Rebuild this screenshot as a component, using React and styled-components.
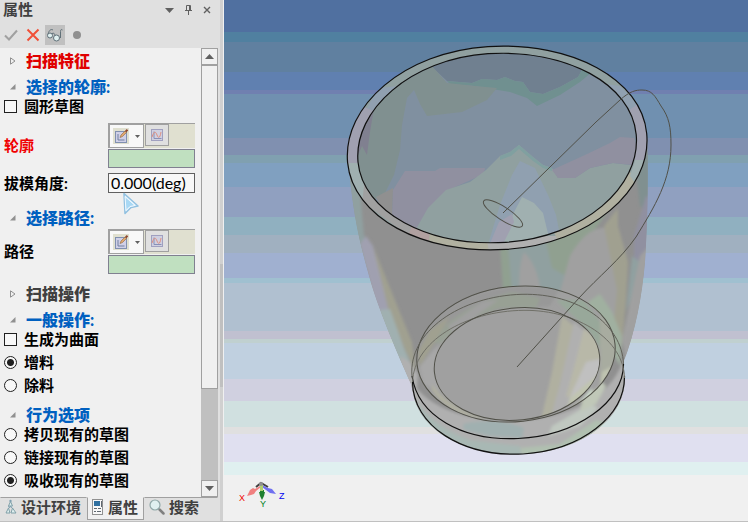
import { useRef, useState } from 'react';
import styled, { createGlobalStyle, css } from 'styled-components';

const colors = {
    panel: '#f0f0f0',
    header: '#e0e0e0',
    line: '#a0a0a0',
    track: '#c0c0c0',
    text: '#404040',
    accent: '#0060c0',
    required: '#f00000',
    title: '#e00000',
};

// [height, colour] from top to bottom
const skyBands = [
    [32, '#5070a0'], [10, '#5080a0'], [30, '#6080a0'], [18, '#6080b0'], [4, '#7080b0'],
    [44, '#7090b0'], [17, '#8090b0'], [8, '#80a0b0'], [24, '#80a0c0'], [30, '#90a0c0'],
    [18, '#90b0c0'], [18, '#a0b0c0'], [25, '#a0b0d0'], [5, '#a0c0d0'], [48, '#b0c0d0'],
    [8, '#c0c0d0'], [4, '#c0d0d0'], [36, '#c0d0e0'], [22, '#d0d0e0'], [26, '#d0e0e0'],
    [7, '#e0e0e0'], [28, '#e0e0f0'], [13, '#e0f0f0'], [46, '#f0f0f0'],
];

const skyGradient = () => {
    const total = skyBands.reduce((sum, [h]) => sum + h, 0);
    let y = 0;
    const stops = skyBands.map(([h, color]) => {
        const from = (y / total) * 100;
        y += h;
        return `${color} ${from}% ${(y / total) * 100}%`;
    });
    return `linear-gradient(${stops.join(', ')})`;
};

const tabs = [
    { id: 'env', title: '设计环境' },
    { id: 'props', title: '属性' },
    { id: 'search', title: '搜索' },
];

const SketchIcon = () => (
    <svg width="16" height="16" viewBox="0 0 16 16" aria-hidden="true">
        <rect width="16" height="16" fill="#e0e0d0" />
        <rect x="2.500" y="3.500" width="11" height="11" fill="#d0d0e8" stroke="#8090b0" />
        <path d="M5 6v6h6.500" fill="none" stroke="#7080a0" />
        <path d="M7 9.500l1-2.500 4-4 1.500 1.500-4 4z" fill="#e0a870" stroke="#906840" strokeWidth=".6" />
        <path d="M12 2.800L13.800 1l1.400 1.400-1.800 1.800z" fill="#904830" />
    </svg>
);

const CurveIcon = () => (
    <svg width="14" height="14" viewBox="0 0 14 14" aria-hidden="true">
        <rect x="1.500" y="1.500" width="11" height="11" fill="#d0d0e0" stroke="#a0a0c0" />
        <path d="M4 3.500v7h7.500" fill="none" stroke="#8890b8" />
        <path d="M2 9c2-6 3.500-6 5-2s3 3 4-3" fill="none" stroke="#e09080" />
    </svg>
);

const TabIcon = ({ id }) => {
    if (id === 'env') {
        return (
            <svg width="12" height="16" viewBox="0 0 12 16" aria-hidden="true">
                <g fill="#e0f0f0" stroke="#80a0a8" strokeWidth="1">
                    <path d="M5.500 2.500L3.500 7h4z" />
                    <path d="M3.500 9l-2.500 5h4zM7.500 9L6 14h5z" />
                </g>
                <circle cx="5.500" cy="2" r="1.200" fill="#80a0b0" />
                <path d="M3.500 7l1 2 1-2 1.500 2" fill="none" stroke="#80a0b0" />
            </svg>
        );
    }
    if (id === 'props') {
        return (
            <svg width="12" height="16" viewBox="0 0 12 16" aria-hidden="true">
                <rect x=".5" y=".5" width="10" height="15" fill="#f8f8f8" stroke="#909090" />
                <rect x="2" y="2" width="6" height="5" fill="#3070a0" />
                <path d="M9.500 2v6M2 9.500h3M6 9.500h3M2 12.500h2M5 12.500h4" stroke="#606870" />
            </svg>
        );
    }
    return (
        <svg width="16" height="16" viewBox="0 0 16 16" aria-hidden="true">
            <path d="M10.500 10.500l4 4" stroke="#808080" strokeWidth="2.500" strokeLinecap="round" />
            <circle cx="6" cy="6" r="5" fill="#e0f0f0" stroke="#90a8a8" strokeWidth="1.200" />
        </svg>
    );
};

const Cursor = () => (
    <CursorSvg width="18" height="24" viewBox="0 0 18 24" aria-hidden="true">
        <path d="M2 1.500L16 14l-7 1.500-6 6z" fill="#e8f4fc" stroke="#90c0e0" strokeWidth="1.500" strokeLinejoin="round" />
        <path d="M3 4.500l10 9-5 1-4 4z" fill="#a8d8f4" stroke="#f0f8ff" strokeWidth="1" />
    </CursorSvg>
);

const Section = ({ title, tone = 'accent', open = true, after = 'none', children }) => {
    const [isOpened, setIsOpened] = useState(open);

    return (
        <SectionBox $after={after}>
            <SectionTitle type="button" $tone={tone} aria-expanded={isOpened} onClick={() => setIsOpened(v => !v)}>
                <svg width="6" height="8" viewBox="0 0 6 8" aria-hidden="true">
                    {isOpened
                        ? <path d="M5.500 1v5.500H0z" fill="#909090" />
                        : <path d="M.5 .8v6.400L5 4z" fill="none" stroke="#909090" />}
                </svg>
                {title}
            </SectionTitle>
            {isOpened && children}
        </SectionBox>
    );
};

const Picker = ({ label, id, required }) => (
    <Field>
        <FieldLabel htmlFor={id} $required={required}>{label}</FieldLabel>
        <PickerBox>
            <PickerTools>
                <ToolButton type="button" $wide aria-label="Sketch">
                    <SketchIcon />
                    <svg width="5" height="3" viewBox="0 0 5 3" aria-hidden="true">
                        <path d="M0 0h5L2.500 3z" fill="#606060" />
                    </svg>
                </ToolButton>
                <ToolButton type="button" aria-label="Curve">
                    <CurveIcon />
                </ToolButton>
            </PickerTools>
            <PickerInput id={id} readOnly />
        </PickerBox>
    </Field>
);

const Option = ({ type = 'radio', children, ...rest }) => (
    <OptionLabel>
        {type === 'radio' ? <Radio type="radio" {...rest} /> : <Checkbox type="checkbox" {...rest} />}
        {children}
    </OptionLabel>
);

const OUTER = 'M347.600 162.600C342.500 106 404 52 488 46.600C572 41.500 641.500 79 646.700 133.500C652 190 590 244 506 249.400C422 254.600 352.800 217 347.600 162.600Z';
const INNER = 'M358 162C353.500 110 410.500 59 488 53.700C566.500 49 631.500 84 636.200 134.500C641 187 583.500 237 506 242.300C427.500 247 362.800 212 358 162Z';
const BODY = 'M349 168C353 215 360 245 371 283C380 313 398 355 411 384L414 398C424 434 468 456 523 454C580 452 624 420 625 380L623 364C636 330 642 296 645 262C648 215 648 180 647.500 138C640 230 360 260 349 168Z';

const Mug = () => (
    <g>
        <defs>
            <filter id="soft"><feGaussianBlur stdDeviation="1.500" /></filter>
            <clipPath id="rim"><path d={`${OUTER}${INNER}`} clipRule="evenodd" /></clipPath>
            <clipPath id="inside"><path d={INNER} /></clipPath>
            <clipPath id="wall"><path d={BODY} /></clipPath>
            <clipPath id="ring"><ellipse cx="516" cy="354" rx="99" ry="67" transform="rotate(-6 516 354)" /></clipPath>
            <clipPath id="floor"><ellipse cx="517" cy="364" rx="83" ry="56" transform="rotate(-6 517 364)" /></clipPath>
        </defs>

        <g clipPath="url(#wall)">
            <path d={BODY} fill="#909090" />
            <g filter="url(#soft)">
                {/* left side reflections */}
                <path d="M340 165L360 190L364 236L372 262L366 270L340 200Z" fill="#90a0a0" />
                <path d="M360 244L366 236L373 246L389 309L378 316Z" fill="#a0a0b0" />
                <path d="M373 246L390 288L412 342L416 372L405 350L388 308Z" fill="#a0a090" />
                <path d="M378 310L390 309L404 348L412 366L404 384L386 345Z" fill="#a0b0b0" />
                <path d="M400 356L410 362L418 374L416 400L404 388Z" fill="#b0b0b0" />
                {/* right side reflections */}
                <path d="M500 246L512 244L513 290L503 290Z" fill="#90a090" />
                <path d="M508 246L556 232L552 262L562 272L580 282L586 300L540 294L512 290Z" fill="#90a0a0" />
                <path d="M524 252C534 262 538 274 541 292L519 290C519 274 520 262 524 252Z" fill="#a0a0a0" />
                <path d="M546 242L610 208L592 234L574 252L566 276L552 268Z" fill="#90a090" />
                <path d="M570 256C580 238 594 226 606 228L620 250L620 340L594 312L560 292Z" fill="#a0a0a0" />
                <path d="M604 226L618 208L618 226L628 262L626 300L622 346L614 322L617 290Z" fill="#a0a090" />
                <path d="M636 170L654 140V220L640 206Z" fill="#809090" />
                <path d="M634 236L646 196L654 200V246L640 264L634 262Z" fill="#9090a0" />
                <path d="M632 256L640 262L636 286L626 312Z" fill="#90a0a0" />
                <path d="M640 256L654 240L650 300L626 360L622 340Z" fill="#a0a0a0" />
                <path d="M588 302L600 294L612 312L622 336L620 366L600 330Z" fill="#a0b0a0" />
                {/* base */}
                <path d="M406 366C420 440 600 440 623 360L634 394C626 446 580 464 520 464C462 464 406 434 406 380Z" fill="#b0b0b0" />
                <path d="M463 424C490 418 510 422 524 428L522 438L490 436L464 430Z" fill="#a0b0b0" />
                <path d="M414 396C424 416 444 430 470 440L520 446L522 458L470 453L426 432Z" fill="#a8b8b4" />
                <path d="M520 448L560 444L596 420L608 424L570 448L524 458Z" fill="#b0c0b0" />
                <path d="M552 426L590 404L598 408L580 426L548 436Z" fill="#c0c8c0" />
                <path d="M582 400L600 380L606 386L596 404L580 412Z" fill="#c0c8b8" />
            </g>
        </g>

        <g clipPath="url(#ring)">
            <path d="M410 280h210v150h-210z" fill="#a0a0a0" />
            <g filter="url(#soft)">
                <path d="M416 344C424 316 462 290 520 286L560 288L550 306L500 310L460 322L432 350L418 370Z" fill="#989898" />
                <path d="M430 342C450 316 480 300 512 292L540 298L536 308L500 308L466 320L440 344Z" fill="#98a094" />
                <path d="M448 326L482 302L498 300L476 316L454 334Z" fill="#a0a0a0" />
                <path d="M418 352L430 330L450 316L436 340L420 366Z" fill="#a0a090" />
                <path d="M420 366L438 346L434 372L440 392L424 384Z" fill="#a8a8a8" />
                <path d="M432 384C444 402 466 414 492 422L478 420C454 414 440 402 432 390Z" fill="#b0b0a0" />
                <path d="M556 300L584 300L600 322L600 348L588 330Z" fill="#98a89a" />
                <path d="M600 314L616 330L617 358L606 382L600 380Z" fill="#a8aca0" />
                <path d="M546 420L566 412L600 386L602 372L612 366L600 394L570 416Z" fill="#c0c4b0" />
                <path d="M574 412L582 400L592 388L592 402L582 412Z" fill="#d0e0d0" />
            </g>
        </g>

        <g clipPath="url(#floor)">
            <path d="M430 300h180v130h-180z" fill="#a0a0a0" />
            <g filter="url(#soft)">
                <path d="M562 316L574 326L560 384L550 424L540 424L552 372Z" fill="#b0b0a0" />
                <path d="M574 322L592 338L572 394L556 424L550 420L560 384Z" fill="#b0b0b0" />
                <path d="M584 328L606 346L604 368L574 400L566 396L576 360Z" fill="#b8b8a8" />
                <path d="M586 362L604 358L604 376L580 400L566 408L572 392Z" fill="#c0c0c0" />
                <path d="M586 384L602 372L592 394L566 410L570 398Z" fill="#c0c4b0" />
            </g>
        </g>

        <g clipPath="url(#inside)">
            <path d={INNER} fill="#8090a0" />
            <path d="M432 60L432 67L447 81L472 83L482 79L497 80L505 77L515 81L523 82L530 92L543 94L560 87L578 77L588 60L520 40Z" fill="#708090" />
            <path d="M447 81L472 83L482 79L497 80L505 77L515 81L523 82L530 92L543 94L560 87L578 77L584 66L592 72L580 82L560 95L537 106L527 98L510 92L492 89L475 86L450 84Z" fill="#709090" />
            <path d="M432 66L447 83L475 86L497 88L487 100L462 112L427 116L420 104L414 90L407 98L402 125L400 150L394 175L385 193L374 200L350 160L370 100Z" fill="#809090" />
            <path d="M356 160L358 128L374 108L370 132L367 155L362 146Z" fill="#808090" />
            <path d="M405 171L435 171L440 168L485 168L484 174L446 191L429 208L414 232L392 216L393 190Z" fill="#9090a0" />
            <path d="M376 197L393 188L392 216L382 210Z" fill="#909090" />
            <path d="M412 236L428 208L446 190L470 182L486 170L500 156L510 152L519 145L533 157L543 165L552 168L558 178L575 178L590 168L613 163L640 166L620 210L560 244L480 250Z" fill="#90a0a0" />
            <path d="M500 156L510 152L519 145L533 157L543 165L552 168L552 171L543 168L533 161L519 149L511 156L500 160Z" fill="#80a0a0" />
            <path d="M552 170L585 155L610 143L620 137L634 138L640 155L633 165L613 163L590 168L575 178L558 178Z" fill="#9090a0" />
            <path d="M520 161L535 168L548 195L556 215L562 246L487 248L500 205L512 175Z" fill="#90a0b0" />
            <path d="M522 197L534 203L543 213L551 246L500 248L510 220Z" fill="#a0b0b0" />
            <path d="M489 246L499 222L512 214L514 222L502 246Z" fill="#a0a0b0" />
        </g>

        <g clipPath="url(#rim)">
            <path d={OUTER} fill="#90a0a0" />
            <path d="M366 110L378 88L400 86L374 114Z" fill="#90a0b0" />
            <path d="M340 163V120L362 106L376 112L360 163Z" fill="#a0a0b0" />
            <path d="M360 182L374 190L424 228L414 240L360 200Z" fill="#a0a0a0" />
            <path d="M345 163H360L364 186L362 204Z" fill="#a0b0b0" />
            <path d="M408 236L412 226L430 234L428 246Z" fill="#b0a0a0" />
            <path d="M428 250L430 230L486 238L496 252Z" fill="#b0b0a0" />
            <path d="M486 236H556L564 250L490 256Z" fill="#b0b0b0" />
            <path d="M554 232L630 172L642 186L562 252Z" fill="#b0b0a0" />
            <path d="M630 176L636 158L650 160L640 190Z" fill="#a0b0b0" />
            <path d="M606 84L620 86L640 106L626 112L610 94Z" fill="#90a0b0" />
            <path d="M626 112L638 104L652 130L650 160L634 160Z" fill="#a0a0b0" />
        </g>

        <g fill="none" stroke="#101010" strokeWidth="1.200">
            <path d={OUTER} />
            <path d={INNER} />
            <path d="M412 376C418 416 462 441 518 438.500C576 436 624 402 623.500 364" />
            <path d="M412.500 382C413 426 462 457 523 454C582 450 625 416 624.500 376" />
        </g>
        <g fill="none" stroke="#505048" strokeWidth="1">
            <ellipse cx="516" cy="354" rx="99.500" ry="67.500" transform="rotate(-6 516 354)" />
            <path d="M412 376C408 332 460 296 522 294.300C578 293 622 324 623.500 364" stroke="#606058" />
            <path d="M412.500 382C414 342 464 311 524 310.300C578 310 624 340 624.500 378" stroke="#707068" />
            <ellipse cx="517" cy="364" rx="83" ry="56" transform="rotate(-6 517 364)" />
            <ellipse cx="503" cy="213.500" rx="23" ry="6.500" transform="rotate(33 503 213.500)" />
            <path d="M503 213L596 122L620 100C630 91 636 90 642 90C652 90 655 96 661 106C669 117 671 127 671 145C671 180 655 206 636 237C620 260 599 276 579 298L517 367" />
        </g>
    </g>
);

const Triad = () => (
    <g fontFamily="Liberation Sans, sans-serif" fontSize="9">
        <path d="M256 487l5-4 7 4" fill="none" stroke="#404040" strokeWidth="2" />
        <path d="M247 496l3-6 3-2 2 1 5-3 1 1-5 4-2 3-3 1z" fill="#f08080" />
        <path d="M262 485l6 3 4 1 4 5-6-1-4-3-4-3z" fill="#7070f0" />
        <path d="M260 490h4v2h1l-1 4-2 4-2-4-1-4h1z" fill="#208030" />
        <path d="M260 485h3v6h-3z" fill="#b0d070" />
        <circle cx="261" cy="484" r="2" fill="#909090" />
        <text x="239" y="501" fill="#f00000">X</text>
        <text x="279" y="499" fill="#0000f0">Z</text>
        <text x="260" y="507" fill="#008020">Y</text>
    </g>
);

const App = () => {
    const [circleSketch, setCircleSketch] = useState(false);
    const [asSurface, setAsSurface] = useState(false);
    const [material, setMaterial] = useState('add');
    const [behaviour, setBehaviour] = useState('absorb');
    const [angle, setAngle] = useState('0.000(deg)');
    const [activeTab, setActiveTab] = useState('props');
    const bodyRef = useRef(null);

    const scroll = (top) => bodyRef.current?.scrollBy({ top });

    return (
        <>
            <GlobalStyle />
            <Window>
                <Panel>
                    <Header>
                        <TitleBar>
                            <Title>属性</Title>
                            <PlainButton type="button" aria-label="Menu">
                                <svg width="9" height="5" viewBox="0 0 9 5"><path d="M0 0h9L4.500 5z" fill="#606060" /></svg>
                            </PlainButton>
                            <PlainButton type="button" aria-label="Pin">
                                <svg width="9" height="10" viewBox="0 0 9 10">
                                    <path d="M2.500 5.500v-5h4v5M1 5.500h7M4.500 6v4M5.500 1v4" fill="none" stroke="#606060" />
                                </svg>
                            </PlainButton>
                            <PlainButton type="button" aria-label="Close">
                                <svg width="8" height="8" viewBox="0 0 8 8">
                                    <path d="M1 1l6 6M7 1L1 7" stroke="#606060" strokeWidth="1.400" />
                                </svg>
                            </PlainButton>
                        </TitleBar>
                        <Commands>
                            <CommandButton type="button" aria-label="OK">
                                <svg width="14" height="12" viewBox="0 0 14 12">
                                    <path d="M1 6.500l4 4 8-9" fill="none" stroke="#a0a0a0" strokeWidth="2" />
                                </svg>
                            </CommandButton>
                            <CommandButton type="button" aria-label="Cancel">
                                <svg width="14" height="14" viewBox="0 0 14 14">
                                    <path d="M1.500 1.500l11 11M12.500 1.500l-11 11" stroke="#f05038" strokeWidth="2" />
                                </svg>
                            </CommandButton>
                            <CommandButton type="button" $pressed aria-label="Preview">
                                <svg width="18" height="16" viewBox="0 0 18 16">
                                    <g fill="#e0f0f0" stroke="#607078">
                                        <path d="M2 8C2.500 4 4.500 1.500 7 3M14.500 11V4.500c0-2 1-2.500 2-1.500M6 6.500c2-1 3 .5 3 2.500" fill="none" />
                                        <ellipse cx="4" cy="8.500" rx="2.500" ry="2.500" />
                                        <ellipse cx="10.500" cy="11" rx="3" ry="3" />
                                    </g>
                                </svg>
                            </CommandButton>
                            <CommandButton type="button" aria-label="Record">
                                <svg width="8" height="8" viewBox="0 0 8 8"><circle cx="4" cy="4" r="4" fill="#909090" /></svg>
                            </CommandButton>
                        </Commands>
                    </Header>

                    <Content>
                        <Form ref={bodyRef}>
                            <Section title="扫描特征" tone="title" open={false} />
                            <Section title="选择的轮廓:" after="wide">
                                <Option type="checkbox" checked={circleSketch} onChange={() => setCircleSketch(v => !v)}>圆形草图</Option>
                                <FieldGroup>
                                    <Picker id="profile" label="轮廓" required />
                                    <Field>
                                        <FieldLabel htmlFor="angle">拔模角度:</FieldLabel>
                                        <AngleInput id="angle" value={angle} onChange={e => setAngle(e.target.value)} />
                                        <Cursor />
                                    </Field>
                                </FieldGroup>
                            </Section>
                            <Section title="选择路径:" after="narrow">
                                <Picker id="path" label="路径" />
                            </Section>
                            <Section title="扫描操作" tone="text" open={false} />
                            <Section title="一般操作:" after="narrow">
                                <Options>
                                    <Option type="checkbox" checked={asSurface} onChange={() => setAsSurface(v => !v)}>生成为曲面</Option>
                                    <Option name="material" checked={material === 'add'} onChange={() => setMaterial('add')}>增料</Option>
                                    <Option name="material" checked={material === 'remove'} onChange={() => setMaterial('remove')}>除料</Option>
                                </Options>
                            </Section>
                            <Section title="行为选项">
                                <Options>
                                    <Option name="behaviour" checked={behaviour === 'copy'} onChange={() => setBehaviour('copy')}>拷贝现有的草图</Option>
                                    <Option name="behaviour" checked={behaviour === 'link'} onChange={() => setBehaviour('link')}>链接现有的草图</Option>
                                    <Option name="behaviour" checked={behaviour === 'absorb'} onChange={() => setBehaviour('absorb')}>吸收现有的草图</Option>
                                </Options>
                            </Section>
                        </Form>
                        <Scrollbar>
                            <ScrollButton type="button" aria-label="Up" onClick={() => scroll(-23)}>
                                <svg width="9" height="5" viewBox="0 0 9 5"><path d="M0 5h9L4.500 0z" fill="#606060" /></svg>
                            </ScrollButton>
                            <Track><Thumb /></Track>
                            <ScrollButton type="button" aria-label="Down" onClick={() => scroll(23)}>
                                <svg width="9" height="5" viewBox="0 0 9 5"><path d="M0 0h9L4.500 5z" fill="#606060" /></svg>
                            </ScrollButton>
                        </Scrollbar>
                    </Content>

                    <Tabs role="tablist">
                        {tabs.map((tab) => (
                            <Tab
                                key={tab.id}
                                type="button"
                                role="tab"
                                aria-selected={activeTab === tab.id}
                                $active={activeTab === tab.id}
                                onClick={() => setActiveTab(tab.id)}
                            >
                                <TabIcon id={tab.id} />
                                {tab.title}
                            </Tab>
                        ))}
                    </Tabs>
                </Panel>

                <Splitter><Grip /></Splitter>

                <Viewport>
                    <Scene viewBox="224 0 524 521" role="img" aria-label="3D">
                        <Mug />
                        <Triad />
                    </Scene>
                </Viewport>
            </Window>
        </>
    );
};

export default App;


const GlobalStyle = createGlobalStyle`
    body {
        margin: 0;
        background: ${colors.panel};
    }

    *, *::before, *::after {
        box-sizing: border-box;
    }

    body, button, input {
        font-family: Lato, "Noto Sans CJK SC", sans-serif;
        font-size: 15px;
        color: ${colors.text};
    }

    svg {
        display: block;
        flex: none;
    }
`;

const Window = styled.main`
    display: grid;
    grid-template-columns: 218px 6px 1fr;
    height: 100vh;
    border-bottom: 1px solid ${colors.track};
`;

const Panel = styled.aside`
    display: flex;
    flex-direction: column;
    min-height: 0;
    background: ${colors.panel};
`;

const Header = styled.header`
    background: ${colors.header};
    padding-bottom: 3px;
`;

const TitleBar = styled.div`
    display: flex;
    align-items: flex-end;
    gap: 3px;
    height: 18px;
    padding: 0 3px;
`;

const Title = styled.h1`
    flex: 1;
    margin: 0;
    font-size: 15px;
    line-height: 18px;
    font-weight: 700;
`;

const bareButton = css`
    display: grid;
    place-items: center;
    padding: 0;
    border: 0;
    background: transparent;
    cursor: pointer;
`;

const PlainButton = styled.button`
    ${bareButton}
    width: 16px;
    height: 16px;
`;

const Commands = styled.div`
    display: flex;
    gap: 2px;
    padding: 7px 1px 0;
`;

const CommandButton = styled.button`
    ${bareButton}
    width: 20px;
    height: 20px;
    background: ${({ $pressed }) => ($pressed ? colors.track : 'transparent')};
`;

const Content = styled.div`
    flex: 1;
    min-height: 0;
    display: grid;
    grid-template-columns: 1fr 17px;
`;

const Form = styled.form`
    display: flex;
    flex-direction: column;
    gap: 8px;
    padding: 4px 6px 0 4px;
    overflow-y: auto;
    scrollbar-width: none;
`;

const afterSizes = { none: '0', narrow: '3px', wide: '8px' };

const SectionBox = styled.section`
    padding-bottom: ${({ $after }) => afterSizes[$after]};
`;

const SectionTitle = styled.button`
    display: flex;
    align-items: center;
    gap: 10px;
    height: 18px;
    padding: 0 6px;
    border: 0;
    background: transparent;
    color: ${({ $tone }) => colors[$tone]};
    font-size: 16px;
    line-height: 18px;
    font-weight: 900;
    cursor: pointer;
`;

const Options = styled.div`
    display: grid;
    gap: 3px;
`;

const OptionLabel = styled.label`
    display: flex;
    align-items: center;
    gap: 7px;
    height: 20px;
    color: #000;
    line-height: 20px;
    font-weight: 700;
`;

const Checkbox = styled.input`
    appearance: none;
    width: 13px;
    height: 13px;
    margin: 0;
    border: 1px solid #202020;
    background: #f8f8f8;

    &:checked {
        background: #303030;
    }
`;

const Radio = styled(Checkbox)`
    border-radius: 50%;

    &:checked {
        background: radial-gradient(circle, #202020 3px, #f8f8f8 4px);
    }
`;

const FieldGroup = styled.div`
    display: grid;
    gap: 5px;
    padding-top: 5px;
`;

const Field = styled.div`
    position: relative;
    display: grid;
    grid-template-columns: 104px 1fr;
    align-items: center;
`;

const FieldLabel = styled.label`
    color: ${({ $required }) => ($required ? colors.required : '#000')};
    line-height: 20px;
    font-weight: 700;
`;

const PickerBox = styled.div`
    display: grid;
    gap: 1px;
    padding-top: 2px;
`;

const PickerTools = styled.div`
    display: flex;
    gap: 1px;
    height: 25px;
    border: solid ${colors.line};
    border-width: 1px 0 0 1px;
    background: #e0e0d0;
`;

const ToolButton = styled.button`
    display: flex;
    align-items: center;
    justify-content: center;
    gap: 6px;
    width: ${({ $wide }) => ($wide ? '35px' : '24px')};
    height: ${({ $wide }) => ($wide ? '24px' : '22px')};
    padding: 0;
    border: 1px solid ${colors.line};
    background: ${({ $wide }) => ($wide ? '#f8f8f8' : '#e0e0e0')};
    cursor: pointer;
`;

const PickerInput = styled.input`
    width: 100%;
    height: 19px;
    padding: 0 2px;
    border: 1px solid #808090;
    background: #c0e0c0;
`;

const AngleInput = styled.input`
    width: 100%;
    height: 20px;
    padding: 0 2px 2px;
    border: 1px solid #606060;
    background: #f8f8f8;
    color: #000;
    font-family: Lato, sans-serif;
    font-size: 16px;
    line-height: 16px;
`;

const CursorSvg = styled.svg`
    position: absolute;
    left: 118px;
    top: 19px;
    pointer-events: none;
`;

const Scrollbar = styled.div`
    display: flex;
    flex-direction: column;
    background: ${colors.track};
`;

const ScrollButton = styled.button`
    ${bareButton}
    height: 17px;
    border: 1px solid ${colors.line};
    background: ${colors.panel};
`;

const Track = styled.div`
    flex: 1;
`;

const Thumb = styled.div`
    height: 78%;
    border: 1px solid ${colors.line};
    background: ${colors.panel};
`;

const Tabs = styled.nav`
    display: flex;
    height: 24px;
    padding-bottom: 1px;
    background: ${colors.header};
`;

const Tab = styled.button`
    display: flex;
    align-items: center;
    gap: 4px;
    padding: 0 5px 3px 4px;
    border: 1px solid transparent;
    border-top-color: ${colors.line};
    background: transparent;
    line-height: 18px;
    font-weight: 700;
    white-space: nowrap;
    cursor: pointer;

    ${({ $active }) =>
        $active &&
        css`
            border-color: ${colors.panel} ${colors.line} ${colors.line};
            background: ${colors.panel};
        `}

    &:last-child {
        flex: 1;
    }
`;

const Splitter = styled.div`
    display: flex;
    align-items: center;
    justify-content: flex-end;
    padding-top: 25vh;
    padding-right: 1px;
    border-left: 2px solid ${colors.header};
    background: linear-gradient(to left, #f0f0f0 1px, #d0d0d0 1px);
`;

const Grip = styled.div`
    width: 3px;
    height: 123px;
    background: ${colors.track};
`;

const Viewport = styled.section`
    min-width: 0;
    min-height: 0;
    background: ${skyGradient()};
`;

const Scene = styled.svg`
    width: 100%;
    height: 100%;
`;
